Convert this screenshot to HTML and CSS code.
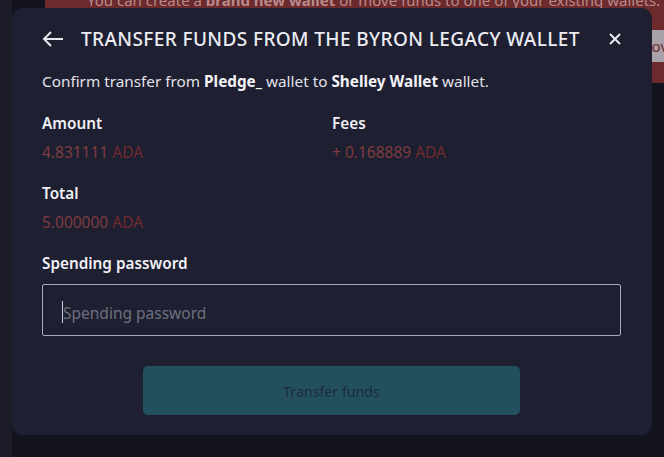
FILE: index.html
```html
<!DOCTYPE html>
<html>
<head>
<meta charset="utf-8">
<link rel="stylesheet" href="styles.css">
</head>
<body>
<div class="page">
  <div class="banner">
    <div class="banner-text">You can create a <b>brand new wallet</b> or move funds to one of your existing wallets.</div>
    <div class="side-btn">Move</div>
  </div>
</div>
<div class="modal">
  <div class="header">
    <svg class="back" width="22" height="16" viewBox="0 0 22 16"><path d="M21 8H2M9 1L2 8l7 7" fill="none" stroke="#e8e8f0" stroke-width="2"/></svg>
    <h1 class="title">TRANSFER FUNDS FROM THE BYRON LEGACY WALLET</h1>
    <svg class="close" width="12" height="12" viewBox="0 0 12 12"><path d="M1 1l10 10M11 1L1 11" stroke="#e8e8f0" stroke-width="2"/></svg>
  </div>
  <p class="intro">Confirm transfer from <b>Pledge_</b> wallet to <b>Shelley Wallet</b> wallet.</p>
  <div class="grid">
    <div class="item">
      <div class="label">Amount</div>
      <div class="value">4.831111 <span class="cur">ADA</span></div>
    </div>
    <div class="item">
      <div class="label">Fees</div>
      <div class="value">+ 0.168889 <span class="cur">ADA</span></div>
    </div>
    <div class="item">
      <div class="label">Total</div>
      <div class="value">5.000000 <span class="cur">ADA</span></div>
    </div>
  </div>
  <div class="label pw-label">Spending password</div>
  <div class="input"><span class="caret"></span><span class="ph">Spending password</span></div>
  <div class="actions"><button class="btn">Transfer funds</button></div>
</div>
</body>
</html>
```
FILE: styles.css
```css
* { box-sizing: border-box; }
html, body { margin: 0; padding: 0; }
body {
  width: 664px; height: 457px; overflow: hidden;
  background: #13131e;
  font-family: "Noto Sans", "Open Sans", sans-serif;
  position: relative;
}
.page { position: relative; height: 457px; overflow: hidden; background: linear-gradient(to right, #1c1c29 0, #1c1c29 12px, #13131e 12px); }
.banner {
  position: absolute; left: 45px; top: -20px; width: 640px; height: 103px;
  background: #6c2a2c; border-radius: 6px;
}
.banner-text {
  position: absolute; left: 42px; top: 9px; width: 560px;
  color: #b98a8c; font-size: 15px; line-height: 22px; white-space: nowrap;
}
.banner-text b { font-weight: 700; }
.side-btn {
  position: absolute; left: 585px; top: 50px; width: 80px; height: 32px;
  background: #a9a2a8; color: #6c2a2c; font-size: 15px; line-height: 32px; padding-left: 8px;
}
.modal {
  position: absolute; left: 12px; top: 8px; width: 640px; height: 427px;
  background: #1e1f30; border-radius: 10px;
  padding: 0 31px 0 30px; color: #e9e9f0;
}
.header { display: flex; align-items: center; height: 62px; }
.back { margin-right: 17px; }
.title { margin: 0; font-size: 19px; font-weight: 500; letter-spacing: 0.4px; flex: 1; color: #ececf3; white-space: nowrap; }
.close { margin-right: 0; }
.intro { margin: 0; font-size: 15.3px; line-height: 22px; color: #e2e2ea; }
.intro b { font-weight: 700; color: #f2f2f7; }
.grid { display: grid; grid-template-columns: 290px 1fr; row-gap: 20px; margin-top: 20px; }
.label { font-size: 15.3px; font-weight: 600; line-height: 22px; color: #f0f0f5; }
.value { font-size: 15.5px; line-height: 20px; margin-top: 8px; color: #7e3c3f; }
.cur { color: #702b2f; }
.pw-label { margin-top: 20px; }
.input {
  margin-top: 10px; height: 52px; width: 579px; border: 1px solid #a8aab8; border-radius: 2px;
  display: flex; align-items: center; padding-left: 20px; position: relative;
}
.caret { width: 1px; height: 22px; background: #c8d0e0; position: absolute; left: 19px; top: 16px; }
.ph { font-size: 15.5px; color: #6e6f7e; margin-top: 6px; }
.actions { display: flex; justify-content: center; margin-top: 30px; }
.btn {
  width: 377px; height: 49px; border: 0; border-radius: 5px; background: #22505e;
  color: #1d2c3a; font-family: inherit; font-size: 14.2px; padding-top: 2px;
}
```
